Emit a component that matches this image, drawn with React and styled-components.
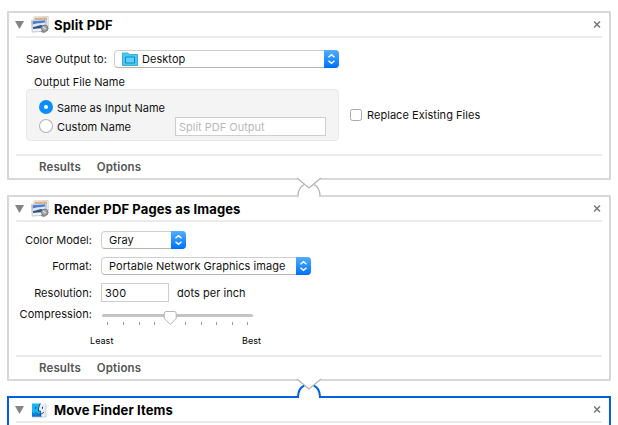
import React from "react";
import styled, { createGlobalStyle, css } from "styled-components";

const Global = createGlobalStyle`
  * { box-sizing: border-box; }
  body { margin: 0; background: #fff; overflow: hidden; }
`;

const Workflow = styled.main`
  display: flex;
  flex-direction: column;
  gap: 15px;
  width: 618px;
  height: 425px;
  padding: 11px 7px 0;
  overflow: hidden;
  background: #fff;
  color: #111;
  font: 11px/16px Inter, "Liberation Sans", sans-serif;
  letter-spacing: 0.04px;
  white-space: nowrap;
`;

const Card = styled.section`
  position: relative;
  flex: none;
  display: flex;
  flex-direction: column;
  width: 604px;
  height: ${(p) => p.$height}px;
  padding: 0 7px;
  border: 2px solid ${(p) => (p.$selected ? "#0060e0" : "#d7d7d7")};
  border-radius: ${(p) => (p.$selected ? 0 : 1)}px;
`;

const Header = styled.header`
  flex: none;
  display: flex;
  align-items: center;
  height: 25px;
  border-bottom: 2px solid #ebebeb;
`;

const Disclosure = styled.svg`
  flex: none;
  width: 9px;
  height: 8px;
  margin: 0 7px 0 -1px;
  fill: #858585;
`;

const IconSlot = styled.span`
  display: flex;
  width: 23px;
  height: 18px;
  svg { width: 18px; height: 18px; }
`;

const Title = styled.h2`
  flex: 1;
  margin: 1px 0 0;
  color: #000;
  font-size: 13px;
  font-weight: 700;
  line-height: 16px;
  letter-spacing: ${(p) => p.$tracking}px;
`;

const Close = styled.svg`
  width: 7px;
  height: 7px;
  margin: 0 1px 1px 0;
  stroke: #777;
  stroke-width: 1.5;
`;

const Footer = styled.footer`
  flex: none;
  display: flex;
  gap: 16px;
  height: 24px;
  margin-top: auto;
  padding: 3px 0 0 23px;
  border-top: 2px solid #ebebeb;
  color: #555;
  font-size: 11.5px;
  font-weight: 600;
  line-height: 17px;
  letter-spacing: 0.12px;
`;

const Row = styled.div`
  display: flex;
  align-items: center;
  height: ${(p) => p.$height}px;
  margin-top: ${(p) => p.$top || 0}px;
  padding-left: ${(p) => p.$indent || 0}px;
`;

const Text = styled.span`
  padding-top: ${(p) => p.$drop || 0}px;
`;

const Label = styled(Text)`
  flex: none;
  width: ${(p) => p.$width}px;
  margin-right: ${(p) => p.$gap ?? 9}px;
  text-align: ${(p) => p.$align || "right"};
`;

const RaisedLabel = styled(Label)`
  align-self: flex-start;
  margin-top: -3px;
`;

const PopUp = styled.div`
  display: flex;
  align-items: center;
  width: ${(p) => p.$width}px;
  height: 18px;
  padding-left: 7px;
  border: 1px solid #cfcfcf;
  border-bottom-color: #b4b4b4;
  border-radius: 4px;
  background: #fff;
`;

const Stepper = styled.svg`
  flex: none;
  width: 15px;
  height: 18px;
  margin: -1px -1px -1px auto;
  border-radius: 0 4px 4px 0;
  background: linear-gradient(#51adff, #087cff 85%, #006af5);
  fill: none;
  stroke: #fff;
  stroke-width: 1.5;
`;

const FolderSlot = styled.svg`
  width: 16px;
  height: 14px;
  margin-right: 4px;
`;

const Group = styled.div`
  display: flex;
  flex-direction: column;
  width: 313px;
  height: 52px;
  padding: 8px 12px 0;
  border: 1px solid #e8e8e8;
  border-radius: 4px;
  background: #f4f4f4;
`;

const Radio = styled.span`
  width: 14px;
  height: 14px;
  margin: 0 4px 1px 0;
  border-radius: 50%;
  background: #fff;
  ${(p) =>
    p.$checked
      ? css`border: 5px solid #0b8dff;`
      : css`border: 1px solid #b2b2b2;`}
`;

const Field = styled.div`
  display: flex;
  align-items: center;
  width: ${(p) => p.$width}px;
  height: 19px;
  padding: 1px 0 0 3px;
  border: 1px solid #cecece;
  background: #fff;
  color: ${(p) => (p.$placeholder ? "#b9b9b9" : "#111")};
  letter-spacing: ${(p) => p.$tracking || 0}px;
`;

const CheckBox = styled.span`
  width: 12px;
  height: 12px;
  margin: 0 5px 1px 11px;
  border: 1px solid #aaa;
  border-radius: 2.5px;
  background: #fff;
`;

const Slider = styled.svg`
  width: 153px;
  height: 18px;
`;

const Ends = styled.div`
  display: flex;
  justify-content: space-between;
  width: 171px;
  margin: 7px 0 0 74px;
  color: #000;
  font-size: 9px;
  line-height: 14px;
`;

const Connector = styled.svg`
  position: absolute;
  z-index: 1;
  left: 287px;
  bottom: -19px;
  width: 26px;
  height: 20px;
  fill: none;
`;

function Link({ selected }) {
  return (
    <Connector viewBox="0 0 26 20">
      <path d="M1.5 0H24.5V3H1.5Z" fill="#fff" />
      <path d="M3 15.5H23V20H3Z" fill="#fff" />
      <path
        d="M2 18.5C2.2 13 4 9.5 8.3 7.5M17.7 7.5C22 9.5 23.8 13 24 18.5"
        stroke={selected ? "#0060e0" : "#b4b4b4"}
        strokeWidth={selected ? 2 : 1.3}
      />
      <path d="M1 1L13 11L25 1" stroke="#b4b4b4" strokeWidth="1.3" />
    </Connector>
  );
}

function PreviewIcon() {
  return (
    <svg viewBox="1.2 1.2 15.8 15.8">
      <path d="M3.6 2L16.3 1.6L16.6 13L5 14.5Z" fill="#eef0f0" stroke="#c9c9c9" strokeWidth=".6" />
      <path d="M4.5 3L15.2 2.6L15.3 5L4.7 5.5Z" fill="#dfb06a" />
      <path d="M1.6 5L14.6 4.2L15.6 14.3L2.2 15.3Z" fill="#f0f2f4" stroke="#aeb2b8" strokeWidth=".6" />
      <path d="M2.5 5.8L13.8 5L14.1 9.5L2.8 10.5Z" fill="#4d7ccc" />
      <path d="M2.8 8.7C6 7 8 8 14 6.6V10L3.1 11Z" fill="#dbe8f5" />
      <path d="M2.7 11L10 9.2L14 10.4L13.9 11.6L3 12.6Z" fill="#315386" />
      <circle cx="13.2" cy="12" r="2.8" fill="#a4a8ab" stroke="#6e7276" strokeWidth=".8" />
      <path d="M11.5 10.7L14 12.7" stroke="#e7e7e7" />
      <path d="M9.5 15L11.5 13.5L14.5 15.2L12.2 16.2Z" fill="#888" />
    </svg>
  );
}

function FinderIcon() {
  return (
    <svg viewBox="0 0 18 18">
      <path d="M1 2.5H15V16H1Z" fill="#e3eef7" />
      <path d="M1 2.5H9.3C8 5 7.5 7.2 7.4 10H9.4C9.4 12.5 9.6 14.3 10 16H1Z" fill="#15b7fa" />
      <path d="M1 11C4 14 7 14.2 9.7 13.8L10 16H1Z" fill="#0876dd" />
      <path d="M9.3 2.5C8 5 7.5 7.2 7.4 10H9.4C9.4 12.5 9.6 14.3 10 16M3.5 11C6.2 14 10.3 14 13 11" fill="none" stroke="#163b60" strokeWidth=".9" />
      <path d="M4.7 5.8V7.8M11.5 5.8V7.8" stroke="#163b60" strokeWidth="1" />
      <path d="M15 2.5V16H1" fill="none" stroke="#b8c3cc" strokeWidth=".7" />
    </svg>
  );
}

function CardHeader({ title, tracking, icon }) {
  return (
    <Header>
      <Disclosure viewBox="0 0 9 8"><path d="M0 0H9L4.5 8Z" /></Disclosure>
      <IconSlot>{icon}</IconSlot>
      <Title $tracking={tracking}>{title}</Title>
      <Close viewBox="0 0 7 7"><path d="M0 .5L6 6.5M6 .5L0 6.5" /></Close>
    </Header>
  );
}

function Arrows() {
  return (
    <Stepper viewBox="0 0 15 18">
      <path d="M4.5 7.3L7.5 4.7L10.5 7.3M4.5 10.7L7.5 13.3L10.5 10.7" />
    </Stepper>
  );
}

function FolderIcon() {
  return (
    <FolderSlot viewBox="0 0 16 14">
      <path d="M.5 1H6L7 2.5H15.5V13.5H.5Z" fill="#4bc7f8" stroke="#36b1e4" />
      <path d="M3.5 5H12.5V11H3.5Z" fill="#5bd2ff" stroke="#1887bd" />
    </FolderSlot>
  );
}

const ticks = [6.5, 22.5, 38.5, 53.5, 84.5, 100.5, 115.5, 131.5, 146.5];

function Compression() {
  return (
    <Slider viewBox="0 0 153 18">
      <rect x="1" y="5" width="151" height="3" rx="1.5" fill="#c4c4c4" />
      {ticks.map((x) => <path key={x} d={`M${x} 13V16`} stroke="#999" />)}
      <path
        d="M65 2.5H73.5Q75.2 2.5 75.2 4.5V9.5L69.2 15.5L63.3 9.5V4.5Q63.3 2.5 65 2.5Z"
        fill="#fff"
        stroke="#b5b5b5"
      />
    </Slider>
  );
}

function CardFooter() {
  return <Footer><span>Results</span><span>Options</span></Footer>;
}

export default function App() {
  return (
    <>
      <Global />
      <Workflow>
        <Card $height={169}>
          <CardHeader title="Split PDF" tracking={0.2} icon={<PreviewIcon />} />
          <Row $height={18} $top={12} $indent={10}>
            <Label $width={82} $gap={6} $align="left">Save Output to:</Label>
            <PopUp $width={225}><FolderIcon /><Text>Desktop</Text><Arrows /></PopUp>
          </Row>
          <Row $height={16} $top={6} $indent={18}><Text>Output File Name</Text></Row>
          <Row $height={52} $top={-1} $indent={10}>
            <Group>
              <Row $height={19}><Radio $checked /><Text $drop={1}>Same as Input Name</Text></Row>
              <Row $height={19}>
                <Radio />
                <Label $width={118} $gap={0} $align="left" $drop={1}>Custom Name</Label>
                <Field $width={152} $placeholder><Text>Split PDF Output</Text></Field>
              </Row>
            </Group>
            <CheckBox />
            <Text>Replace Existing Files</Text>
          </Row>
          <CardFooter />
          <Link />
        </Card>

        <Card $height={186}>
          <CardHeader title="Render PDF Pages as Images" tracking={0.12} icon={<PreviewIcon />} />
          <Row $height={18} $top={9}>
            <Label $width={76}>Color Model:</Label>
            <PopUp $width={85}><Text>Gray</Text><Arrows /></PopUp>
          </Row>
          <Row $height={18} $top={8}>
            <Label $width={76}>Format:</Label>
            <PopUp $width={210}><Text>Portable Network Graphics image</Text><Arrows /></PopUp>
          </Row>
          <Row $height={19} $top={8}>
            <Label $width={76}>Resolution:</Label>
            <Field $width={68} $tracking={0.2}><Text>300</Text></Field>
            <Row $height={19} $indent={8}><Text>dots per inch</Text></Row>
          </Row>
          <Row $height={18} $top={7}>
            <RaisedLabel $width={76}>Compression:</RaisedLabel>
            <Compression />
          </Row>
          <Ends><span>Least</span><span>Best</span></Ends>
          <CardFooter />
          <Link selected />
        </Card>

        <Card $height={60} $selected>
          <CardHeader title="Move Finder Items" tracking={0.1} icon={<FinderIcon />} />
        </Card>
      </Workflow>
    </>
  );
}
